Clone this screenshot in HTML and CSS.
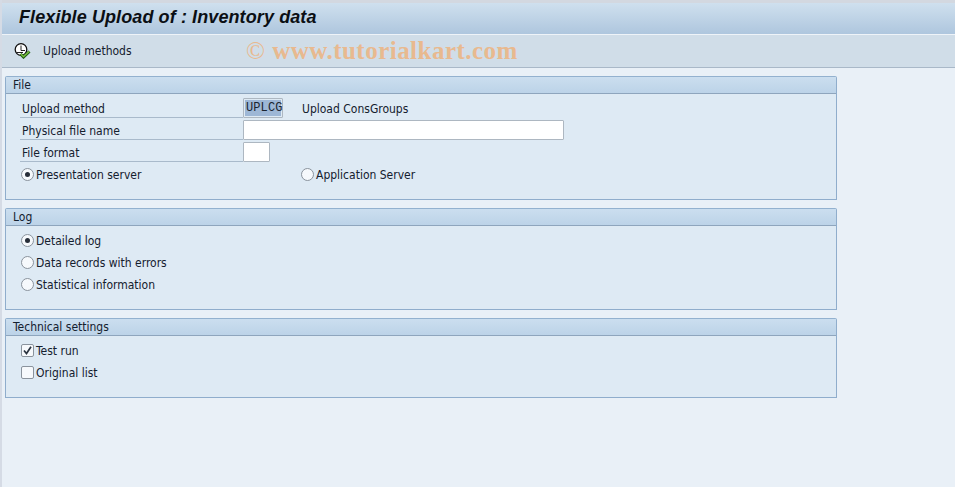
FILE: index.html
```html
<!DOCTYPE html>
<html lang="en">
<head>
<meta charset="utf-8">
<title>Flexible Upload of : Inventory data</title>
<link rel="stylesheet" href="styles.css">
</head>
<body>
<div class="screen">
  <header class="title-bar"><h1>Flexible Upload of : Inventory data</h1></header>
  <nav class="toolbar">
    <svg class="tool-icon" width="18" height="16" viewBox="0 0 18 16" aria-hidden="true">
      <circle cx="7" cy="6.5" r="5.8" fill="#fff" stroke="#111" stroke-width="1.3"/>
      <path d="M7 2.5V7.5H11M2.5 9.5H9" fill="none" stroke="#222" stroke-width="1"/>
      <path d="M6.5 11L9.5 14L15.5 8.5" fill="none" stroke="#1f5d12" stroke-width="3"/>
      <path d="M6.8 11L9.5 13.6L15.2 8.4" fill="none" stroke="#7cc343" stroke-width="1.3"/>
    </svg>
    <span>Upload methods</span>
  </nav>
  <div class="watermark"><span class="copyright">©</span> www.tutorialkart.com</div>
  <main class="content">
    <section class="panel">
      <h2 class="panel-head">File</h2>
      <div class="panel-body">
        <div class="row">
          <label class="label">Upload method</label>
          <span class="field field-code"><span class="selected">UPLCG</span></span>
          <span class="desc">Upload ConsGroups</span>
        </div>
        <div class="row">
          <label class="label">Physical file name</label>
          <span class="field field-long"></span>
        </div>
        <div class="row">
          <label class="label">File format</label>
          <span class="field field-short"></span>
        </div>
        <div class="row row-option">
          <span class="option option-wide"><span class="radio on"></span><span class="text">Presentation server</span></span>
          <span class="option"><span class="radio"></span><span class="text">Application Server</span></span>
        </div>
      </div>
    </section>
    <section class="panel">
      <h2 class="panel-head">Log</h2>
      <div class="panel-body">
        <div class="row row-option"><span class="option"><span class="radio on"></span><span class="text">Detailed log</span></span></div>
        <div class="row row-option"><span class="option"><span class="radio"></span><span class="text">Data records with errors</span></span></div>
        <div class="row row-option"><span class="option"><span class="radio"></span><span class="text">Statistical information</span></span></div>
      </div>
    </section>
    <section class="panel">
      <h2 class="panel-head">Technical settings</h2>
      <div class="panel-body">
        <div class="row row-option">
          <span class="option">
            <span class="check">
              <svg width="9" height="9" viewBox="0 0 9 9" aria-hidden="true"><path d="M1 4.5L3.5 7.5L8 0.8" fill="none" stroke="#2b3440" stroke-width="1.7"/></svg>
            </span><span class="text">Test run</span>
          </span>
        </div>
        <div class="row row-option"><span class="option"><span class="check"></span><span class="text">Original list</span></span></div>
      </div>
    </section>
  </main>
</div>
</body>
</html>
```

FILE: styles.css
```css
html, body {
  margin: 0;
  padding: 0;
  height: 100%;
  overflow: hidden;
}
body {
  font-family: "DejaVu Sans", "Noto Sans", sans-serif;
  font-stretch: condensed;
  font-size: 12px;
  letter-spacing: 0;
  color: #14202e;
}
.screen {
  position: relative;
  height: 487px;
  box-sizing: border-box;
  background: #e9f0f7;
  border-left: 2px solid #d5dbe5;
}
.title-bar {
  height: 31px;
  box-sizing: content-box;
  border-top: 3px solid #d3d8e0;
  border-bottom: 1px solid #eef3f8;
  background: linear-gradient(#cfe0ee, #aec6de);
  display: flex;
  align-items: center;
  padding-left: 17px;
}
.title-bar h1 {
  margin: 0 0 2px;
  font: italic bold 18px "Liberation Sans", Arial, sans-serif;
  letter-spacing: 0.1px;
  color: #0b0f14;
}
.toolbar {
  height: 32px;
  border-bottom: 1px solid #a9b8c8;
  background: #d0dde8;
  display: flex;
  align-items: center;
  padding-left: 12px;
  gap: 11px;
}
.tool-icon { flex: none; margin-top: -1px; }
.watermark {
  position: absolute;
  left: 244px;
  top: 37px;
  font: bold 25px "Liberation Serif", serif;
  letter-spacing: 0.48px;
  color: #e8b98f;
}
.copyright { font-weight: normal; }
.content {
  padding: 8px 0 0 3px;
  display: flex;
  flex-direction: column;
  gap: 8px;
}
.panel {
  width: 832px;
  box-sizing: border-box;
  border: 1px solid #8fadcc;
  border-top-color: #93b1cf;
  border-radius: 2px 2px 0 0;
  background: #deeaf4;
}
.panel-head {
  height: 16px;
  line-height: 17px;
  margin: 0;
  padding-left: 7px;
  border-bottom: 1px solid #8ea5bd;
  background: linear-gradient(#cbdeef, #bcd3e8);
  font-size: 12px;
  font-weight: normal;
  color: #14202e;
}
.panel-body { padding: 3px 0 14px; }
.row {
  height: 22px;
  display: flex;
  align-items: center;
  padding-left: 14px;
}
.label {
  width: 223px;
  box-sizing: border-box;
  height: 21px;
  line-height: 24px;
  padding-left: 2px;
  border-bottom: 1px solid #a9bacb;
  flex: none;
  align-self: flex-start;
}
.field {
  box-sizing: border-box;
  height: 20px;
  background: #fff;
  border: 1px solid #adb7c1;
  border-radius: 1px;
  flex: none;
}
.field-code {
  width: 40px;
  padding: 1px;
  background: #deeaf4;
  margin-right: 19px;
}
.selected {
  display: block;
  height: 16px;
  background: #9db7d6;
  font: 12px/16px "Liberation Mono", monospace;
  letter-spacing: 0.1px;
  color: #1a2530;
  padding-left: 1px;
}
.field-long { width: 321px; }
.field-short { width: 27px; }
.desc { flex: none; padding-top: 2px; }
.option {
  display: inline-flex;
  align-items: center;
  gap: 2px;
}
.text { padding-top: 2px; }
.option-wide { width: 280px; }
.row-option { padding-left: 15px; }
.radio {
  box-sizing: border-box;
  width: 13px;
  height: 13px;
  border: 1px solid #8a939d;
  border-radius: 50%;
  background: #f6f9fc;
  flex: none;
  display: flex;
  align-items: center;
  justify-content: center;
}
.radio.on::after {
  content: "";
  width: 5px;
  height: 5px;
  border-radius: 50%;
  background: #262d38;
}
.check {
  box-sizing: border-box;
  width: 13px;
  height: 13px;
  border: 1px solid #8a939d;
  border-radius: 2px;
  background: #f6f9fc;
  flex: none;
  display: flex;
  align-items: center;
  justify-content: center;
}
```
